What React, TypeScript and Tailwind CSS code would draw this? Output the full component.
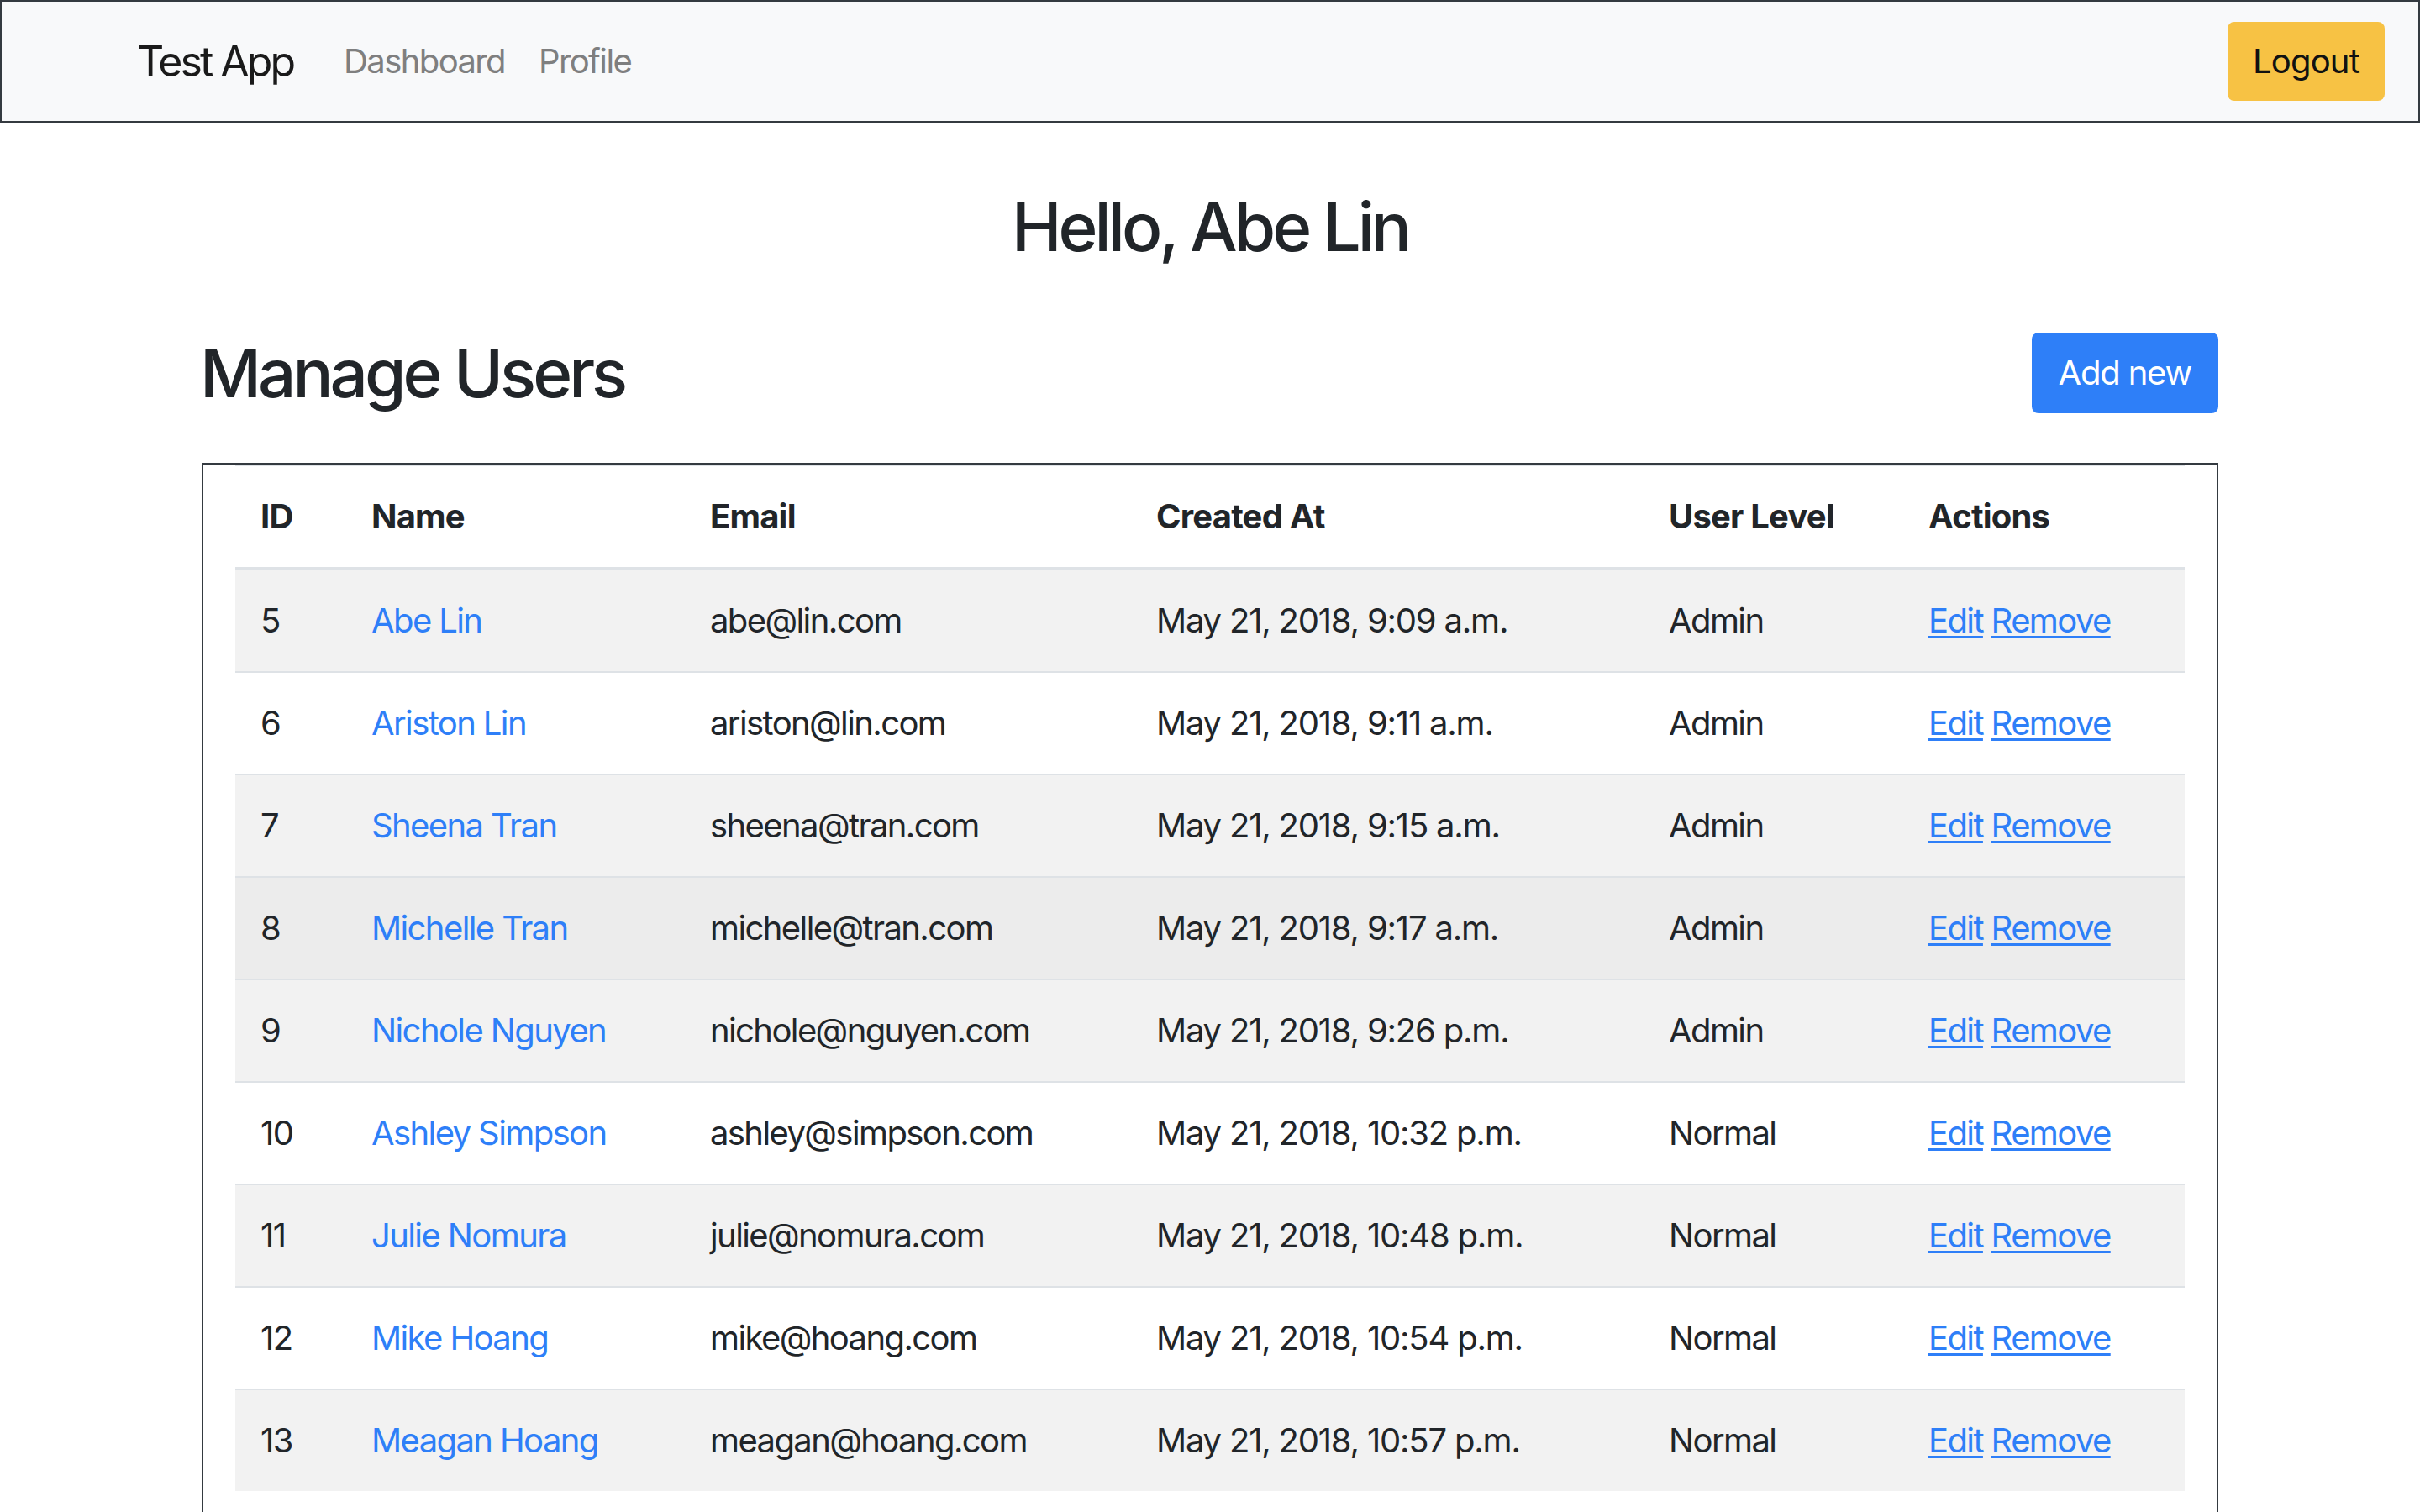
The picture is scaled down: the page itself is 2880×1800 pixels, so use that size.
import React from 'react';

type User = {
  id: number;
  name: string;
  email: string;
  createdAt: string;
  level: string;
};

const users: User[] = [
  { id: 5, name: 'Abe Lin', email: 'abe@lin.com', createdAt: 'May 21, 2018, 9:09 a.m.', level: 'Admin' },
  { id: 6, name: 'Ariston Lin', email: 'ariston@lin.com', createdAt: 'May 21, 2018, 9:11 a.m.', level: 'Admin' },
  { id: 7, name: 'Sheena Tran', email: 'sheena@tran.com', createdAt: 'May 21, 2018, 9:15 a.m.', level: 'Admin' },
  { id: 8, name: 'Michelle Tran', email: 'michelle@tran.com', createdAt: 'May 21, 2018, 9:17 a.m.', level: 'Admin' },
  { id: 9, name: 'Nichole Nguyen', email: 'nichole@nguyen.com', createdAt: 'May 21, 2018, 9:26 p.m.', level: 'Admin' },
  { id: 10, name: 'Ashley Simpson', email: 'ashley@simpson.com', createdAt: 'May 21, 2018, 10:32 p.m.', level: 'Normal' },
  { id: 11, name: 'Julie Nomura', email: 'julie@nomura.com', createdAt: 'May 21, 2018, 10:48 p.m.', level: 'Normal' },
  { id: 12, name: 'Mike Hoang', email: 'mike@hoang.com', createdAt: 'May 21, 2018, 10:54 p.m.', level: 'Normal' },
  { id: 13, name: 'Meagan Hoang', email: 'meagan@hoang.com', createdAt: 'May 21, 2018, 10:57 p.m.', level: 'Normal' },
];

// row 8 is shown in its hover state in the reference
const HOVERED_ID = 8;

const rowBg = (index: number, id: number) => {
  if (id === HOVERED_ID) return 'bg-[#ececec]';
  return index % 2 === 0 ? 'bg-[#f2f2f2]' : 'bg-white';
};

export default function App() {
  return (
    <div className="min-h-screen bg-white text-[#212529] font-['Inter',_'Liberation_Sans',_sans-serif]">
      {/* Navbar */}
      <nav className="h-[146px] border-2 border-[#343a40] bg-[#f8f9fa] flex items-center pl-[161px] pr-[40px]">
        <a href="#" className="text-[50px] leading-[75px] text-[#1a1a1a] tracking-[-3px] mr-[40px]">
          Test App
        </a>
        <a href="#" className="px-[20px] text-[40px] leading-[60px] text-[#7f7f7f] tracking-[-1.6px]">
          Dashboard
        </a>
        <a href="#" className="px-[20px] text-[40px] leading-[60px] text-[#7f7f7f] tracking-[-1.6px]">
          Profile
        </a>
        <button className="ml-auto h-[94px] px-[30px] rounded-[8px] bg-[#f7c244] text-[40px] leading-[60px] text-[#111] tracking-[-0.8px]">
          Logout
        </button>
      </nav>

      {/* Main */}
      <main className="w-[2400px] mx-auto">
        <h1 className="mt-[76px] text-center text-[80px] leading-[96px] font-medium tracking-[-4px]">
          Hello, Abe Lin
        </h1>

        <div className="mt-[78px] flex items-center justify-between">
          <h1 className="text-[80px] leading-[96px] font-medium tracking-[-4px] -ml-[2px]">Manage Users</h1>
          <button className="h-[96px] px-[32px] rounded-[8px] bg-[#2e7ff8] text-white text-[40px] leading-[60px] tracking-[-1.2px]">
            Add new
          </button>
        </div>

        <div className="mt-[59px] border-2 border-[#343a40] px-[38px] pb-[40px]">
          <table className="w-[2320px] table-fixed border-collapse text-[40px] leading-[60px] tracking-[-1.6px]">
            <colgroup>
              <col className="w-[132px]" />
              <col className="w-[403px]" />
              <col className="w-[531px]" />
              <col className="w-[610px]" />
              <col className="w-[309px]" />
              <col className="w-[335px]" />
            </colgroup>
            <thead>
              <tr className="border-t-2 border-b-4 border-[#dee2e6] tracking-[-0.8px]">
                <th className="p-[30px] text-left font-bold">ID</th>
                <th className="p-[30px] text-left font-bold">Name</th>
                <th className="p-[30px] text-left font-bold">Email</th>
                <th className="p-[30px] text-left font-bold">Created At</th>
                <th className="p-[30px] text-left font-bold">User Level</th>
                <th className="p-[30px] text-left font-bold">Actions</th>
              </tr>
            </thead>
            <tbody>
              {users.map((u, i) => (
                <tr key={u.id} className={`border-t-2 border-[#dee2e6] ${rowBg(i, u.id)}`}>
                  <td className="p-[30px]">{u.id}</td>
                  <td className="p-[30px]">
                    <a href="#" className="text-[#2e7ff8]">{u.name}</a>
                  </td>
                  <td className="p-[30px] whitespace-nowrap">{u.email}</td>
                  <td className="p-[30px] whitespace-nowrap tracking-[-1.2px]">{u.createdAt}</td>
                  <td className="p-[30px]">{u.level}</td>
                  <td className="p-[30px] whitespace-nowrap">
                    <a href="#" className="text-[#2e7ff8] underline decoration-[3px] underline-offset-[4px]">Edit</a>{' '}
                    <a href="#" className="text-[#2e7ff8] underline decoration-[3px] underline-offset-[4px]">Remove</a>
                  </td>
                </tr>
              ))}
            </tbody>
          </table>
        </div>
      </main>
    </div>
  );
}
